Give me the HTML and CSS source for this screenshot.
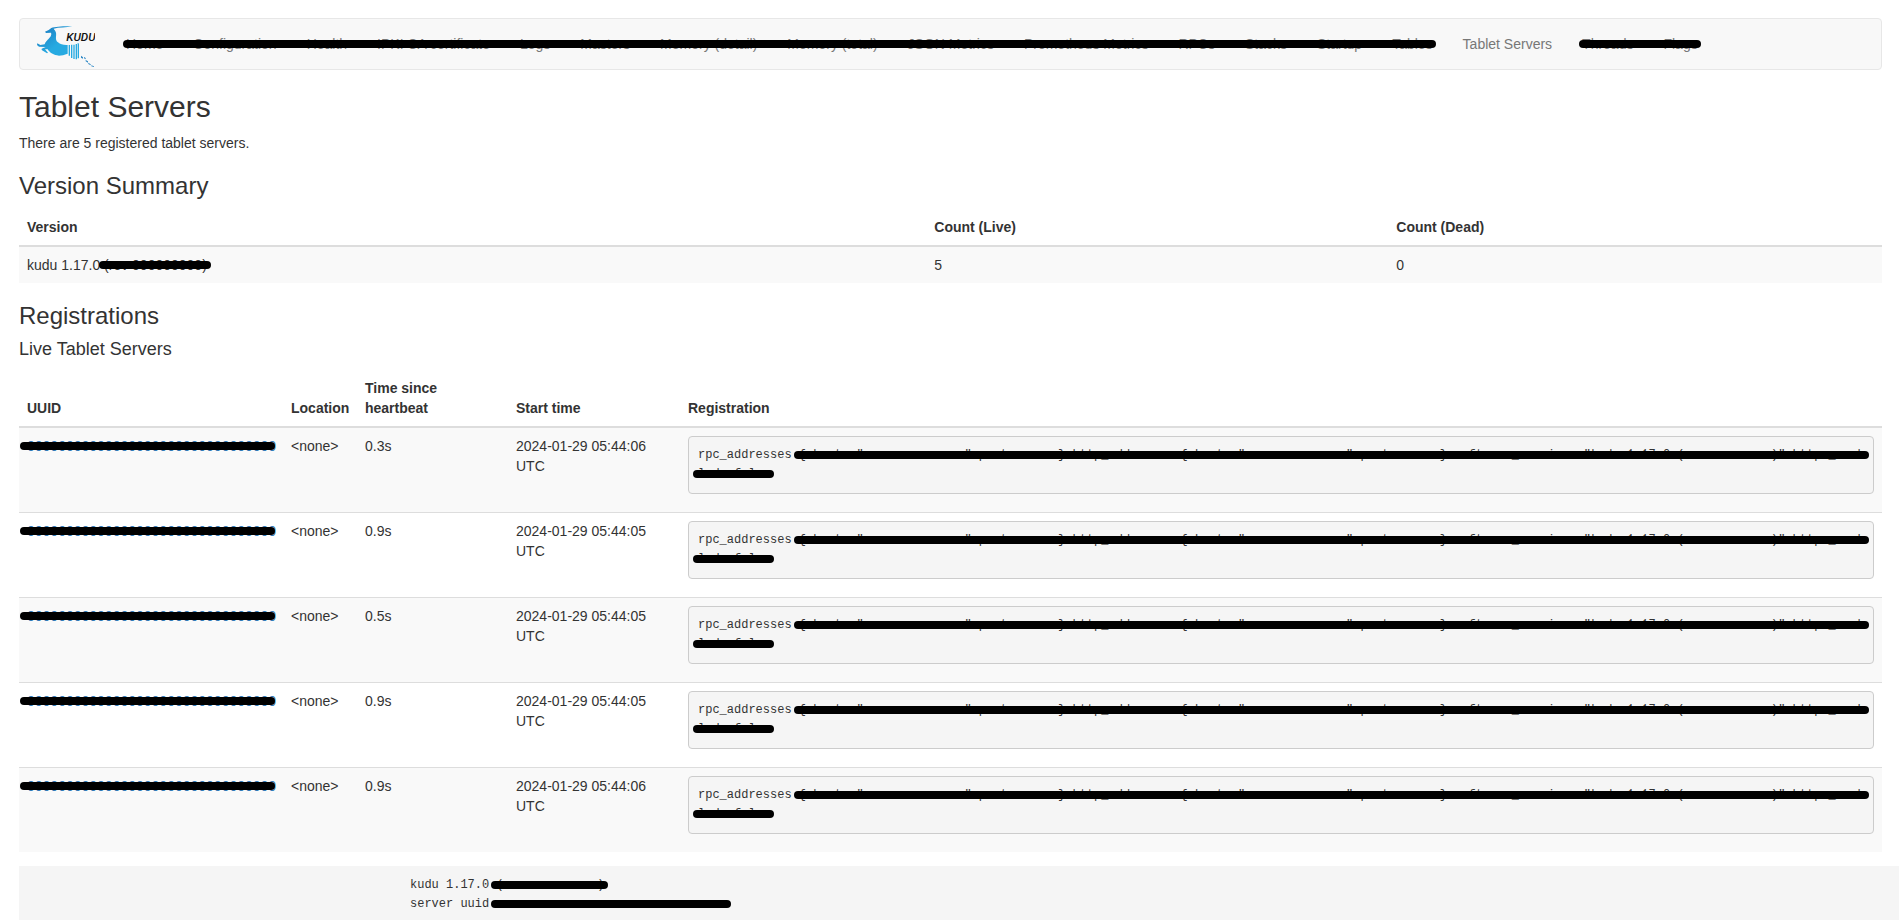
FILE: index.html
```
<!DOCTYPE html>
<html lang="en">

<head>
    <meta charset="UTF-8">
    <meta name="viewport" content="width=device-width, initial-scale=1.0">
    <title>Kudu</title>
    <link rel="stylesheet" href="styles.css">
</head>

<body>
    <div class="page">
        <nav class="navbar">
            <a class="brand" href="#" aria-label="Kudu">
                <svg width="58" height="41" viewBox="0 0 174 123">
                    <defs>
                        <linearGradient id="blue" x1="0" y1="0" x2="1" y2="1">
                            <stop offset="0" stop-color="#1b75bc"/>
                            <stop offset="0.6" stop-color="#27aae1"/>
                        </linearGradient>
                    </defs>
                    <path fill="url(#blue)" d="M106 1C82 0 54 2 43 6L35 12L24 17L27 21L42 20C45 28 39 34 32 41C26 47 24 51 23 55L10 57L1 52L0 57L6 62L26 63L14 68L14 72L30 82L33 80L24 70L32 70C38 80 50 88 66 89C74 89 82 86 92 83L92 57C80 58 70 55 63 49C53 41 59 31 57 20C56 14 51 10 50 8C66 4 88 5 106 1Z"/>
                    <g fill="#27aae1">
                        <path d="M95 57h4v32h-4zM102 56h4v40h-4zM109 56h4v43h-4zM116 54h4v46h-4zM122 50l4 3v44h-4z"/>
                        <path d="M132 89l6 5v4l-6-3zM141 93l5 3v4l-5-3zM146 102l7 4v4l-7-4zM154 110l7 5v3l-7-4zM163 118l8 3v2l-8-2z" fill="#2a86c4"/>
                    </g>
                    <text class="brand-name" x="88" y="46">KUDU</text>
                </svg>
            </a>
            <ul class="nav-list masked">
                <li><a href="#">Home</a></li>
                <li><a href="#">Configuration</a></li>
                <li><a href="#">Health</a></li>
                <li><a href="#">IPKI CA certificate</a></li>
                <li><a href="#">Logs</a></li>
                <li><a href="#">Masters</a></li>
                <li><a href="#">Memory (detail)</a></li>
                <li><a href="#">Memory (total)</a></li>
                <li><a href="#">JSON Metrics</a></li>
                <li><a href="#">Prometheus Metrics</a></li>
                <li><a href="#">RPCs</a></li>
                <li><a href="#">Stacks</a></li>
                <li><a href="#">Startup</a></li>
                <li><a href="#">Tables</a></li>
            </ul>
            <ul class="nav-list">
                <li><a href="#">Tablet Servers</a></li>
            </ul>
            <ul class="nav-list masked">
                <li><a href="#">Threads</a></li>
                <li><a href="#">Flags</a></li>
            </ul>
        </nav>

        <h2>Tablet Servers</h2>
        <p>There are 5 registered tablet servers.</p>

        <h3>Version Summary</h3>
        <table class="table versions">
            <thead>
                <tr>
                    <th class="col-version">Version</th>
                    <th class="col-live">Count (Live)</th>
                    <th>Count (Dead)</th>
                </tr>
            </thead>
            <tbody>
                <tr>
                    <td>kudu 1.17.0 <span class="masked">(rev 000000000)</span></td>
                    <td>5</td>
                    <td>0</td>
                </tr>
            </tbody>
        </table>

        <h3>Registrations</h3>
        <h4>Live Tablet Servers</h4>
        <table class="table servers">
            <thead>
                <tr>
                    <th class="col-uuid">UUID</th>
                    <th class="col-location">Location</th>
                    <th class="col-heartbeat">Time since<br>heartbeat</th>
                    <th class="col-start">Start time</th>
                    <th>Registration</th>
                </tr>
            </thead>
            <tbody>
                <tr>
                    <td><a class="masked" href="#">00000000000000000000000000000000</a></td>
                    <td>&lt;none&gt;</td>
                    <td>0.3s</td>
                    <td>2024-01-29 05:44:06 UTC</td>
                    <td><pre>rpc_addresses <span class="masked">{ host: "xxxxxxxxxxxxxx" port: xxxx } http_addresses { host: "xxxxxxxxxxxxxx" port: xxxx } software_version: "kudu 1.17.0 (rev xxxxxxxx)" https_enab</span>
<span class="masked">led: false</span></pre></td>
                </tr>
                <tr>
                    <td><a class="masked" href="#">00000000000000000000000000000000</a></td>
                    <td>&lt;none&gt;</td>
                    <td>0.9s</td>
                    <td>2024-01-29 05:44:05 UTC</td>
                    <td><pre>rpc_addresses <span class="masked">{ host: "xxxxxxxxxxxxxx" port: xxxx } http_addresses { host: "xxxxxxxxxxxxxx" port: xxxx } software_version: "kudu 1.17.0 (rev xxxxxxxx)" https_enab</span>
<span class="masked">led: false</span></pre></td>
                </tr>
                <tr>
                    <td><a class="masked" href="#">00000000000000000000000000000000</a></td>
                    <td>&lt;none&gt;</td>
                    <td>0.5s</td>
                    <td>2024-01-29 05:44:05 UTC</td>
                    <td><pre>rpc_addresses <span class="masked">{ host: "xxxxxxxxxxxxxx" port: xxxx } http_addresses { host: "xxxxxxxxxxxxxx" port: xxxx } software_version: "kudu 1.17.0 (rev xxxxxxxx)" https_enab</span>
<span class="masked">led: false</span></pre></td>
                </tr>
                <tr>
                    <td><a class="masked" href="#">00000000000000000000000000000000</a></td>
                    <td>&lt;none&gt;</td>
                    <td>0.9s</td>
                    <td>2024-01-29 05:44:05 UTC</td>
                    <td><pre>rpc_addresses <span class="masked">{ host: "xxxxxxxxxxxxxx" port: xxxx } http_addresses { host: "xxxxxxxxxxxxxx" port: xxxx } software_version: "kudu 1.17.0 (rev xxxxxxxx)" https_enab</span>
<span class="masked">led: false</span></pre></td>
                </tr>
                <tr>
                    <td><a class="masked" href="#">00000000000000000000000000000000</a></td>
                    <td>&lt;none&gt;</td>
                    <td>0.9s</td>
                    <td>2024-01-29 05:44:06 UTC</td>
                    <td><pre>rpc_addresses <span class="masked">{ host: "xxxxxxxxxxxxxx" port: xxxx } http_addresses { host: "xxxxxxxxxxxxxx" port: xxxx } software_version: "kudu 1.17.0 (rev xxxxxxxx)" https_enab</span>
<span class="masked">led: false</span></pre></td>
                </tr>
            </tbody>
        </table>
    </div>

    <footer class="footer">
        <div class="footer-text">kudu 1.17.0 <span class="masked">(rev xxxxxxxxx)</span>
server uuid <span class="masked">xxxxxxxxxxxxxxxxxxxxxxxxxxxxxxxx</span></div>
    </footer>
</body>

</html>
```
FILE: styles.css
```
* {
    box-sizing: border-box;
}
body {
    margin: 0;
    font-family: "Liberation Sans", Arial, sans-serif;
    font-size: 14px;
    line-height: 20px;
    color: #333;
    background-color: #fff;
}
a {
    color: #337ab7;
    text-decoration: none;
}
.page {
    padding: 18px 17px 0 19px;
}

/* navbar */
.navbar {
    display: flex;
    min-height: 52px;
    margin-bottom: 20px;
    background-color: #f8f8f8;
    border: 1px solid #e7e7e7;
    border-radius: 4px;
}
.brand {
    padding: 7px 16px 0 17px;
}
.brand svg {
    display: block;
}
.brand-name {
    font-family: "Liberation Sans Narrow", Roboto, sans-serif;
    font-size: 35px;
    font-style: italic;
    font-weight: 500;
    fill: #111;
}
.nav-list {
    display: flex;
    margin: 0;
    padding: 0;
    list-style: none;
}
.nav-list a {
    display: block;
    padding: 15px;
    color: #777;
    white-space: nowrap;
}

/* black bar over the values that are not shown */
.masked {
    position: relative;
}
.masked::after {
    content: "";
    position: absolute;
    left: -5px;
    right: -4px;
    top: 50%;
    height: 8px;
    margin-top: -4px;
    border-radius: 4px;
    background-color: #000;
}
.nav-list.masked::after {
    left: 12px;
    right: 12px;
}
td a.masked::after {
    left: -7px;
    right: 1px;
}

/* headings */
h2, h3, h4 {
    margin: 0 0 10px;
    font-weight: normal;
}
h2 {
    font-size: 30px;
    line-height: 33px;
}
h3 {
    font-size: 24px;
    line-height: 26px;
}
h4 {
    font-size: 18px;
    line-height: 21px;
}
p {
    margin: 0 0 20px;
}

/* tables */
.table {
    width: 100%;
    margin-bottom: 20px;
    border-spacing: 0;
    table-layout: fixed;
}
.table th {
    padding: 8px;
    text-align: left;
    vertical-align: bottom;
    border-bottom: 2px solid #ddd;
}
.table td {
    padding: 8px;
    vertical-align: top;
    border-top: 1px solid #ddd;
}
.table tbody tr:first-child td {
    border-top: 0;
}
.table tbody tr:nth-child(odd) {
    background-color: #f9f9f9;
}
.servers {
    margin-bottom: 14px;
}
.col-version {
    width: 48.7%;
}
.col-live {
    width: 24.8%;
}
.col-uuid {
    width: 264px;
}
.col-location {
    width: 74px;
}
.col-heartbeat {
    width: 151px;
}
.col-start {
    width: 172px;
}
pre {
    margin: 0 0 10px;
    padding: 9px;
    font-family: "Liberation Mono", monospace;
    font-size: 12px;
    line-height: 19px;
    background-color: #f5f5f5;
    border: 1px solid #ccc;
    border-radius: 4px;
    overflow: hidden;
}

/* footer */
.footer {
    margin-left: 19px;
    padding: 10px 0 6px;
    background-color: #f5f5f5;
}
.footer-text {
    max-width: 1098px;
    margin: 0 auto;
    font-family: "Liberation Mono", monospace;
    font-size: 12px;
    line-height: 19px;
    white-space: pre;
}
```
